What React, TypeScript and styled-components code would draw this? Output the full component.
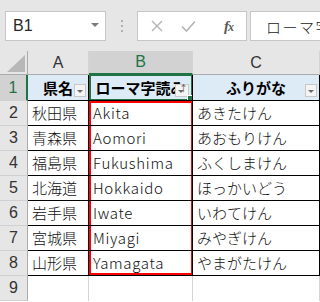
import React from 'react';
import styled, { createGlobalStyle, css } from 'styled-components';

const green = '#217346';
const red = '#ff0000';
const line = '#000';
const gridGray = '#d4d4d4';

type Row = { pref: string; roma: string; kana: string };

const rows: Row[] = [
  { pref: '秋田県', roma: 'Akita', kana: 'あきたけん' },
  { pref: '青森県', roma: 'Aomori', kana: 'あおもりけん' },
  { pref: '福島県', roma: 'Fukushima', kana: 'ふくしまけん' },
  { pref: '北海道', roma: 'Hokkaido', kana: 'ほっかいどう' },
  { pref: '岩手県', roma: 'Iwate', kana: 'いわてけん' },
  { pref: '宮城県', roma: 'Miyagi', kana: 'みやぎけん' },
  { pref: '山形県', roma: 'Yamagata', kana: 'やまがたけん' },
];

function App() {
  return (
    <Page>
      <GlobalStyle />
      <FormulaBar>
        <NameBox>
          <span>B1</span>
          <Caret />
        </NameBox>
        <Grip>
          <i />
          <i />
          <i />
        </Grip>
        <Controls>
          <svg width="12" height="12" viewBox="0 0 12 12">
            <path d="M1 1 L11 11 M11 1 L1 11" stroke="#b4b4b4" strokeWidth="1.4" fill="none" />
          </svg>
          <svg width="15" height="12" viewBox="0 0 15 12">
            <path d="M1 6.5 L5.5 11 L14 1.5" stroke="#b4b4b4" strokeWidth="1.6" fill="none" />
          </svg>
          <Fx>
            f<small>x</small>
          </Fx>
        </Controls>
        <FormulaInput>ローマ字読み</FormulaInput>
      </FormulaBar>

      <Sheet>
        <Corner>
          <svg width="18" height="17" viewBox="0 0 18 17">
            <path d="M18 0 L18 17 L0 17 Z" fill="#b8b8b8" />
          </svg>
        </Corner>
        <ColHead>A</ColHead>
        <ColHead $selected>B</ColHead>
        <ColHead>C</ColHead>

        <RowHead $selected>1</RowHead>
        <HeadCell>
          県名
          <FilterBtn />
        </HeadCell>
        <HeadCell $active>
          ローマ字読み
          <FilterBtn $sorted />
          <Handle />
        </HeadCell>
        <HeadCell>
          ふりがな
          <FilterBtn />
        </HeadCell>

        {rows.map((r, i) => (
          <React.Fragment key={r.pref}>
            <RowHead>{i + 2}</RowHead>
            <Cell>{r.pref}</Cell>
            <Cell $latin $mark={i === 0 ? 'top' : i === rows.length - 1 ? 'bottom' : 'mid'}>
              {r.roma}
            </Cell>
            <Cell>{r.kana}</Cell>
          </React.Fragment>
        ))}

        <RowHead>9</RowHead>
        <EmptyCell />
        <EmptyCell />
        <EmptyCell />
      </Sheet>
    </Page>
  );
}

export default App;

const GlobalStyle = createGlobalStyle`
  html, body {
    margin: 0;
    padding: 0;
    background: #fff;
  }
  body {
    font-family: "Noto Sans CJK JP", "Noto Sans", sans-serif;
  }
`;

const Page = styled.div`
  width: 320px;
  height: 302px;
  overflow: hidden;
  background: #fff;
`;

const FormulaBar = styled.div`
  display: flex;
  align-items: stretch;
  height: 51px;
  box-sizing: border-box;
  padding: 11px 0 10px 5px;
  background: #e6e6e6;
`;

const NameBox = styled.div`
  width: 101px;
  box-sizing: border-box;
  border: 1px solid #c6c6c6;
  background: #fff;
  display: flex;
  align-items: center;
  justify-content: space-between;
  padding: 0 6px 0 7px;
  font-family: "Liberation Sans", sans-serif;
  font-size: 16px;
  color: #262626;
`;

const Caret = styled.i`
  width: 0;
  height: 0;
  border-left: 4px solid transparent;
  border-right: 4px solid transparent;
  border-top: 4px solid #7a7a7a;
  margin-top: -2px;
`;

const Grip = styled.div`
  width: 31px;
  display: flex;
  flex-direction: column;
  align-items: center;
  justify-content: center;
  gap: 3px;

  i {
    width: 2px;
    height: 2px;
    background: #b0b0b0;
  }
`;

const Controls = styled.div`
  width: 110px;
  box-sizing: border-box;
  border: 1px solid #c6c6c6;
  background: #fff;
  display: flex;
  align-items: center;
  padding: 0 13px 0 13px;
  gap: 17px;

  svg:nth-child(2) {
    margin-left: 1px;
  }
`;

const Fx = styled.span`
  margin-left: auto;
  font-family: "Liberation Serif", serif;
  font-style: italic;
  font-weight: bold;
  font-size: 15px;
  color: #5a5a5a;
  letter-spacing: -1px;

  small {
    font-size: 12px;
  }
`;

const FormulaInput = styled.div`
  flex: 1;
  margin-left: 3px;
  border: 1px solid #c6c6c6;
  border-right: none;
  background: #fff;
  display: flex;
  align-items: center;
  padding-left: 15px;
  white-space: nowrap;
  overflow: hidden;
  font-size: 15px;
  font-weight: 300;
  color: #222;
  letter-spacing: 1.5px;
`;

const Sheet = styled.div`
  display: grid;
  grid-template-columns: 28px 61px 104px 127px;
  grid-template-rows: 24px 26px repeat(8, 25px);
`;

const headerBase = css`
  box-sizing: border-box;
  background: #e6e6e6;
  display: flex;
  align-items: center;
  justify-content: center;
  font-family: "Liberation Sans", sans-serif;
  font-size: 16px;
  color: #333;
`;

const Corner = styled.div`
  ${headerBase};
  align-items: flex-end;
  justify-content: flex-end;
  padding: 0 2px 2px 0;
  border-right: 1px solid #ababab;
  border-bottom: 1px solid #ababab;
`;

const ColHead = styled.div<{ $selected?: boolean }>`
  ${headerBase};
  border-right: 1px solid ${gridGray};
  border-bottom: 1px solid #ababab;
  ${(p) =>
    p.$selected &&
    css`
      background: #d2d2d2;
      color: ${green};
      border-bottom: 2px solid ${green};
    `}
`;

const RowHead = styled.div<{ $selected?: boolean }>`
  ${headerBase};
  border-right: 1px solid #ababab;
  border-bottom: 1px solid #d0d0d0;
  ${(p) =>
    p.$selected &&
    css`
      background: #d2d2d2;
      color: ${green};
      border-right: 2px solid ${green};
    `}
`;

const Cell = styled.div<{ $mark?: 'top' | 'mid' | 'bottom'; $latin?: boolean }>`
  position: relative;
  box-sizing: border-box;
  display: flex;
  align-items: center;
  padding: 0 3px 1px 4px;
  border-right: 1px solid ${line};
  border-bottom: 1px solid ${line};
  font-size: 15px;
  font-weight: 300;
  color: #111;
  white-space: nowrap;
  overflow: hidden;
  letter-spacing: ${(p) => (p.$latin ? '0.7px' : '0')};

  ${(p) =>
    p.$mark &&
    css`
      &::after {
        content: '';
        position: absolute;
        left: 0;
        right: -1px;
        top: ${p.$mark === 'top' ? '0' : '-1px'};
        bottom: ${p.$mark === 'bottom' ? '0' : '-1px'};
        border-left: 2px solid ${red};
        border-right: 2px solid ${red};
        ${p.$mark === 'top' && `border-top: 2px solid ${red};`}
        ${p.$mark === 'bottom' && `border-bottom: 2px solid ${red};`}
      }
    `}
`;

const HeadCell = styled.div<{ $active?: boolean }>`
  position: relative;
  box-sizing: border-box;
  display: flex;
  align-items: center;
  justify-content: center;
  padding-bottom: 1px;
  background: #ddebf7;
  border-right: 1px solid ${line};
  border-bottom: 1px solid ${line};
  font-size: 15px;
  font-weight: bold;
  color: #000;
  white-space: nowrap;
  overflow: visible;

  ${(p) =>
    p.$active &&
    css`
      overflow: hidden;
      &::after {
        content: '';
        position: absolute;
        inset: -1px -1px -1px 0;
        border: 2px solid ${green};
      }
    `}
`;

const FilterBtn = styled.span<{ $sorted?: boolean }>`
  position: absolute;
  right: 2px;
  bottom: 3px;
  width: ${(p) => (p.$sorted ? '14px' : '12px')};
  height: 13px;
  box-sizing: border-box;
  border: 1px solid #c8c8c8;
  background: #f4f4f4;
  z-index: 1;

  &::before {
    content: '';
    position: absolute;
    left: 2px;
    top: 5px;
    border-left: 3.5px solid transparent;
    border-right: 3.5px solid transparent;
    border-top: 3.5px solid #6a6a6a;
  }

  ${(p) =>
    p.$sorted &&
    css`
      right: 3px;
      &::after {
        content: '↑';
        position: absolute;
        right: 0;
        top: -3px;
        font-size: 9px;
        font-weight: normal;
        color: #555;
      }
    `}
`;

const Handle = styled.span`
  position: absolute;
  right: -2px;
  bottom: -2px;
  width: 5px;
  height: 5px;
  background: ${green};
  border: 1px solid #fff;
  z-index: 3;
`;

const EmptyCell = styled.div`
  border-right: 1px solid ${gridGray};
`;
